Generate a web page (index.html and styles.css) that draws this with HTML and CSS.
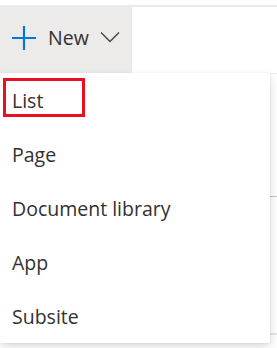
FILE: index.html
```html
<!DOCTYPE html>
<html>
<head>
<meta charset="utf-8">
<link rel="stylesheet" href="styles.css">
</head>
<body>
<div class="cmdbar">
  <button class="new-btn">
    <svg class="plus" width="26" height="26" viewBox="0 0 26 26"><path d="M1 13H25M13 1V25" stroke="#0078d4" stroke-width="2.2" fill="none"/></svg>
    <span class="label">New</span>
    <svg class="chev" width="20" height="12" viewBox="0 0 20 12"><path d="M1 1.5L10 10.5L19 1.5" stroke="#484644" stroke-width="1.4" fill="none"/></svg>
  </button>
</div>
<div class="content">
  <div class="row r1"></div>
  <div class="row r2"></div>
  <div class="row r3"></div>
</div>
<div class="menu">
  <div class="item">List<span class="mark"></span></div>
  <div class="item">Page</div>
  <div class="item">Document library</div>
  <div class="item">App</div>
  <div class="item">Subsite</div>
</div>
</body>
</html>
```
FILE: styles.css
```css
* { box-sizing: border-box; }
html, body { margin: 0; padding: 0; background: #fff; }
body {
  position: relative;
  padding-top: 5px;
  font-family: "Segoe UI", "Open Sans", sans-serif;
  color: #323130;
  width: 277px;
  height: 348px;
  overflow: hidden;
}
.cmdbar {
  display: flex;
  height: 68px;
  border-top: 2px solid #edebe9;
}
.new-btn {
  display: flex;
  align-items: center;
  width: 132px;
  height: 68px;
  margin-top: -2px;
  padding: 0 0 0 11px;
  border: 0;
  background: #edebe9;
  font-family: inherit;
  color: #323130;
  font-size: 19.5px;
}
.plus { display: block; margin-top: -2px; }
.label { margin-left: 11px; line-height: 1; margin-top: -3px; }
.chev { display: block; margin-left: 11px; margin-top: -5px; }
.content { display: flex; flex-direction: column; }
.row { width: 100%; }
.r1 { height: 123px; border-top: 1px solid #edebe9; }
.r2 { height: 137px; border-top: 1px solid #c8c6c4; }
.r3 { height: 20px; border-top: 2px solid #e8e6e4; }
.menu {
  position: absolute;
  left: 0;
  top: 73px;
  width: 270px;
  background: #fff;
  box-shadow: 0 4.8px 10.8px rgba(0,0,0,0.132), 0 0.9px 2.7px rgba(0,0,0,0.108);
  display: flex;
  flex-direction: column;
}
.item {
  position: relative;
  height: 54px;
  display: flex;
  align-items: center;
  padding-left: 12px;
  font-size: 19.5px;
  color: #323130;
}
.mark {
  position: absolute;
  left: 3px;
  top: 5px;
  width: 82px;
  height: 39px;
  border: 3px solid #e81123;
}
```
